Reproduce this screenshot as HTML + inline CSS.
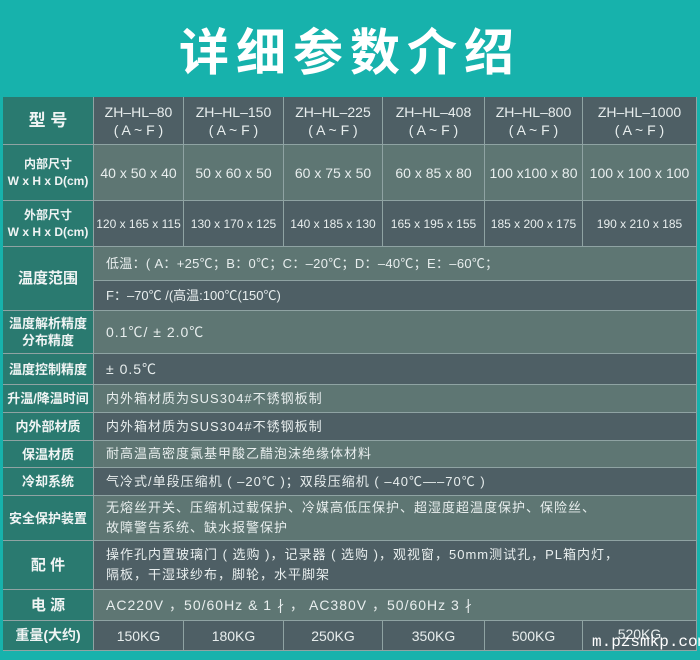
<!DOCTYPE html><html><head><meta charset="utf-8"><style>
*{margin:0;padding:0;box-sizing:border-box}
body{width:700px;height:660px;background:#17b2ac;position:relative;overflow:hidden;font-family:"Liberation Sans","Noto Sans CJK SC",sans-serif;color:#e8eeee}
.t{position:absolute;left:0;top:13px;width:700px;text-align:center;font-size:50px;font-weight:bold;color:#fff;letter-spacing:7px}
.c{position:absolute;border-right:1px solid #8fa3a3;border-bottom:1px solid #8fa3a3;display:flex;align-items:center;font-size:13px;overflow:hidden;white-space:nowrap}
.h{background:#2a7a70;justify-content:center;text-align:center;font-weight:bold;font-size:13px;line-height:17px;color:#f0f4f4}
.D{background:#4e5f65}.L{background:#5e7673}
.n{justify-content:center;text-align:center}
.p{padding-left:12px;letter-spacing:1px;line-height:20px}
.w{position:absolute;left:592px;top:633px;font-family:"Liberation Mono",monospace;font-size:16px;color:#fff}
</style></head><body>
<div class="t">详细参数介绍</div>
<div style="position:absolute;left:3px;top:97px;width:694px;height:554px;border-top:1px solid #8fa3a3;border-left:1px solid #8fa3a3"></div>
<div class="c h" style="left:3px;top:97px;width:91px;height:48px;font-size:17px">型 号</div>
<div class="c D n" style="left:94px;top:97px;width:90px;height:48px;font-size:14px;line-height:18px">ZH–HL–80<br>( A ~ F )</div>
<div class="c D n" style="left:184px;top:97px;width:100px;height:48px;font-size:14px;line-height:18px">ZH–HL–150<br>( A ~ F )</div>
<div class="c D n" style="left:284px;top:97px;width:99px;height:48px;font-size:14px;line-height:18px">ZH–HL–225<br>( A ~ F )</div>
<div class="c D n" style="left:383px;top:97px;width:102px;height:48px;font-size:14px;line-height:18px">ZH–HL–408<br>( A ~ F )</div>
<div class="c D n" style="left:485px;top:97px;width:98px;height:48px;font-size:14px;line-height:18px">ZH–HL–800<br>( A ~ F )</div>
<div class="c D n" style="left:583px;top:97px;width:114px;height:48px;font-size:14px;line-height:18px">ZH–HL–1000<br>( A ~ F )</div>
<div class="c h" style="left:3px;top:145px;width:91px;height:56px;font-size:12px">内部尺寸<br>W x H x D(cm)</div>
<div class="c L n" style="left:94px;top:145px;width:90px;height:56px;font-size:14px">40 x 50 x 40</div>
<div class="c L n" style="left:184px;top:145px;width:100px;height:56px;font-size:14px">50 x 60 x 50</div>
<div class="c L n" style="left:284px;top:145px;width:99px;height:56px;font-size:14px">60 x 75 x 50</div>
<div class="c L n" style="left:383px;top:145px;width:102px;height:56px;font-size:14px">60 x 85 x 80</div>
<div class="c L n" style="left:485px;top:145px;width:98px;height:56px;font-size:14px">100 x100 x 80</div>
<div class="c L n" style="left:583px;top:145px;width:114px;height:56px;font-size:14px">100 x 100 x 100</div>
<div class="c h" style="left:3px;top:201px;width:91px;height:46px;font-size:12px">外部尺寸<br>W x H x D(cm)</div>
<div class="c D n" style="left:94px;top:201px;width:90px;height:46px;font-size:12px">120 x 165 x 115</div>
<div class="c D n" style="left:184px;top:201px;width:100px;height:46px;font-size:12px">130 x 170 x 125</div>
<div class="c D n" style="left:284px;top:201px;width:99px;height:46px;font-size:12px">140 x 185 x 130</div>
<div class="c D n" style="left:383px;top:201px;width:102px;height:46px;font-size:12px">165 x 195 x 155</div>
<div class="c D n" style="left:485px;top:201px;width:98px;height:46px;font-size:12px">185 x 200 x 175</div>
<div class="c D n" style="left:583px;top:201px;width:114px;height:46px;font-size:12px">190 x 210 x 185</div>
<div class="c h" style="left:3px;top:247px;width:91px;height:64px;font-size:15px">温度范围</div>
<div class="c L p" style="left:94px;top:247px;width:603px;height:34px;letter-spacing:0.3px">低温：( A：+25℃；B：0℃；C：–20℃；D：–40℃；E：–60℃；</div>
<div class="c D p" style="left:94px;top:281px;width:603px;height:30px;letter-spacing:0">F：–70℃ /(高温:100℃(150℃)</div>
<div class="c h" style="left:3px;top:311px;width:91px;height:43px">温度解析精度<br>分布精度</div>
<div class="c L p" style="left:94px;top:311px;width:603px;height:43px;font-size:14px">0.1℃/ ± 2.0℃</div>
<div class="c h" style="left:3px;top:354px;width:91px;height:31px">温度控制精度</div>
<div class="c D p" style="left:94px;top:354px;width:603px;height:31px;font-size:14px">± 0.5℃</div>
<div class="c h" style="left:3px;top:385px;width:91px;height:28px">升温/降温时间</div>
<div class="c L p" style="left:94px;top:385px;width:603px;height:28px">内外箱材质为SUS304#不锈钢板制</div>
<div class="c h" style="left:3px;top:413px;width:91px;height:28px">内外部材质</div>
<div class="c D p" style="left:94px;top:413px;width:603px;height:28px">内外箱材质为SUS304#不锈钢板制</div>
<div class="c h" style="left:3px;top:441px;width:91px;height:27px">保温材质</div>
<div class="c L p" style="left:94px;top:441px;width:603px;height:27px">耐高温高密度氯基甲酸乙醋泡沫绝缘体材料</div>
<div class="c h" style="left:3px;top:468px;width:91px;height:28px">冷却系统</div>
<div class="c D p" style="left:94px;top:468px;width:603px;height:28px">气冷式/单段压缩机 ( –20℃ )；双段压缩机 ( –40℃—–70℃ )</div>
<div class="c h" style="left:3px;top:496px;width:91px;height:45px">安全保护装置</div>
<div class="c L p" style="left:94px;top:496px;width:603px;height:45px">无熔丝开关、压缩机过载保护、冷媒高低压保护、超湿度超温度保护、保险丝、<br>故障警告系统、缺水报警保护</div>
<div class="c h" style="left:3px;top:541px;width:91px;height:49px;font-size:15px">配 件</div>
<div class="c D p" style="left:94px;top:541px;width:603px;height:49px">操作孔内置玻璃门 ( 选购 )，记录器 ( 选购 )，观视窗，50mm测试孔，PL箱内灯，<br>隔板，干湿球纱布，脚轮，水平脚架</div>
<div class="c h" style="left:3px;top:590px;width:91px;height:31px;font-size:15px">电 源</div>
<div class="c L p" style="left:94px;top:590px;width:603px;height:31px;font-size:14px">AC220V ，50/60Hz &amp; 1 ∤ ， AC380V ，50/60Hz 3 ∤</div>
<div class="c h" style="left:3px;top:621px;width:91px;height:30px;font-size:14px">重量(大约)</div>
<div class="c D n" style="left:94px;top:621px;width:90px;height:30px;font-size:14px">150KG</div>
<div class="c D n" style="left:184px;top:621px;width:100px;height:30px;font-size:14px">180KG</div>
<div class="c D n" style="left:284px;top:621px;width:99px;height:30px;font-size:14px">250KG</div>
<div class="c D n" style="left:383px;top:621px;width:102px;height:30px;font-size:14px">350KG</div>
<div class="c D n" style="left:485px;top:621px;width:98px;height:30px;font-size:14px">500KG</div>
<div class="c D n" style="left:583px;top:621px;width:114px;height:30px;font-size:14px;align-items:flex-start;padding-top:5px">520KG</div>
<div class="w">m.pzsmkp.com</div>
</body></html>
